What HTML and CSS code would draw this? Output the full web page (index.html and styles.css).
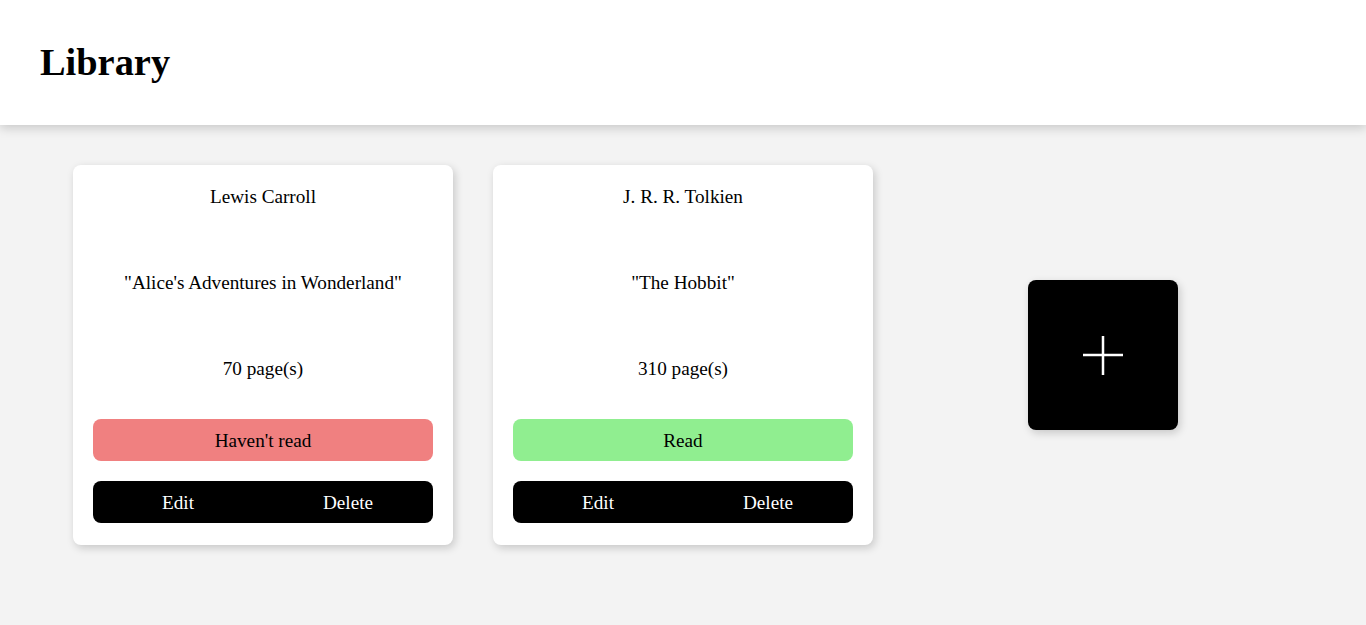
FILE: index.html
```html
<!DOCTYPE html>
<html lang="en">
<head>
<meta charset="utf-8">
<title>Library</title>
<link rel="stylesheet" href="styles.css">
</head>
<body>
<header class="header">
  <h1 class="title">Library</h1>
</header>
<main class="shelf">
  <div class="card">
    <p class="author">Lewis Carroll</p>
    <p class="book">"Alice's Adventures in Wonderland"</p>
    <p class="pages">70 page(s)</p>
    <button class="status unread">Haven't read</button>
    <div class="actions">
      <button class="action">Edit</button>
      <button class="action">Delete</button>
    </div>
  </div>
  <div class="card">
    <p class="author">J. R. R. Tolkien</p>
    <p class="book">"The Hobbit"</p>
    <p class="pages">310 page(s)</p>
    <button class="status read">Read</button>
    <div class="actions">
      <button class="action">Edit</button>
      <button class="action">Delete</button>
    </div>
  </div>
  <button class="add" aria-label="Add book">
    <svg width="42" height="42" viewBox="0 0 42 42"><path d="M21 2V41M1 21H41" stroke="#fff" stroke-width="2.5" fill="none"/></svg>
  </button>
</main>
</body>
</html>
```
FILE: styles.css
```css
* { box-sizing: border-box; }
html, body { margin: 0; padding: 0; }
body {
  background: #f3f3f3;
  font-family: "Liberation Serif", "Times New Roman", serif;
  color: #000;
  min-height: 625px;
}
.header {
  background: #fff;
  height: 125px;
  padding: 0 40px;
  display: flex;
  align-items: center;
  box-shadow: 0 3px 10px rgba(0,0,0,0.18);
  position: relative;
}
.title {
  margin: 0;
  font-size: 38.4px;
  font-weight: bold;
  line-height: 1;
}
.shelf {
  display: grid;
  grid-template-columns: repeat(3, 420px);
  justify-items: center;
  align-items: center;
  padding: 40px 53px;
}
.card {
  width: 380px;
  height: 380px;
  background: #fff;
  border-radius: 8px;
  box-shadow: 2px 3px 8px rgba(0,0,0,0.18);
  padding: 22px 20px;
  display: flex;
  flex-direction: column;
  align-items: stretch;
}
.card p {
  margin: 0;
  text-align: center;
  font-size: 19.2px;
  line-height: 20px;
}
.card .book, .card .pages { margin-top: 66px; }
button {
  font-family: inherit;
  font-size: 19.2px;
  border: none;
  cursor: pointer;
}
.status {
  margin-top: 40px;
  height: 42px;
  padding: 2px 0 0;
  border-radius: 8px;
  color: #000;
}
.unread { background: #f08080; }
.read { background: #90ee90; }
.actions {
  margin-top: 20px;
  height: 42px;
  background: #000;
  border-radius: 8px;
  display: grid;
  grid-template-columns: 1fr 1fr;
}
.action {
  background: transparent;
  color: #fff;
  padding: 2px 0 0;
}
.add {
  width: 150px;
  height: 150px;
  background: #000;
  border-radius: 8px;
  box-shadow: 2px 3px 8px rgba(0,0,0,0.18);
  display: flex;
  align-items: center;
  justify-content: center;
  padding: 0;
}
.add svg { display: block; }
```
